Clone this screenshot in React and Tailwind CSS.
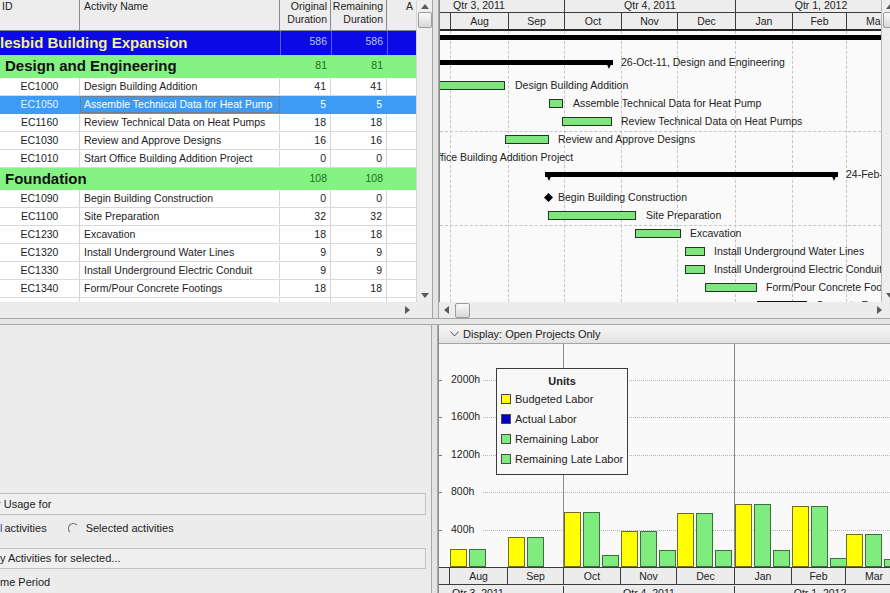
import React from 'react';

const FONT = "font-['Liberation_Sans',Arial,sans-serif]";

// activity table rows; the gantt side reuses the same heights
const ROWS = [
  { kind: 'project', name: 'lesbid Building Expansion', od: 586, rd: 586, hc: 'h-[24px]' },
  { kind: 'wbs', name: 'Design and Engineering', od: 81, rd: 81, hc: 'h-[23px]' },
  { id: 'EC1000', name: 'Design Building Addition', od: 41, rd: 41 },
  { id: 'EC1050', name: 'Assemble Technical Data for Heat Pump', od: 5, rd: 5, selected: true },
  { id: 'EC1160', name: 'Review Technical Data on Heat Pumps', od: 18, rd: 18, rule: true },
  { id: 'EC1030', name: 'Review and Approve Designs', od: 16, rd: 16 },
  { id: 'EC1010', name: 'Start Office Building Addition Project', od: 0, rd: 0 },
  { kind: 'wbs', name: 'Foundation', od: 108, rd: 108, hc: 'h-[22px]' },
  { id: 'EC1090', name: 'Begin Building Construction', od: 0, rd: 0 },
  { id: 'EC1100', name: 'Site Preparation', od: 32, rd: 32, rule: true },
  { id: 'EC1230', name: 'Excavation', od: 18, rd: 18 },
  { id: 'EC1320', name: 'Install Underground Water Lines', od: 9, rd: 9 },
  { id: 'EC1330', name: 'Install Underground Electric Conduit', od: 9, rd: 9 },
  { id: 'EC1340', name: 'Form/Pour Concrete Footings', od: 18, rd: 18 },
  { id: '', name: '', od: '', rd: '' },
];

// bar geometry in px from the left edge of the visible timeline
const GANTT = [
  { type: 'project' },
  { type: 'summary', from: -20, to: 173, top: 5, end: true, label: '26-Oct-11, Design and Engineering', lx: 181 },
  { type: 'bar', from: -10, to: 65, label: 'Design Building Addition', lx: 75 },
  { type: 'bar', from: 109, to: 123, label: 'Assemble Technical Data for Heat Pump', lx: 133 },
  { type: 'bar', from: 122, to: 172, label: 'Review Technical Data on Heat Pumps', lx: 181 },
  { type: 'bar', from: 65, to: 109, label: 'Review and Approve Designs', lx: 118 },
  { type: 'text', label: 'ffice Building Addition Project', lx: -2 },
  { type: 'summary', from: 105, to: 398, top: 4, start: true, end: true, label: '24-Feb-12, Foundation', lx: 406 },
  { type: 'milestone', at: 108, label: 'Begin Building Construction', lx: 118 },
  { type: 'bar', from: 108, to: 196, label: 'Site Preparation', lx: 206 },
  { type: 'bar', from: 195, to: 241, label: 'Excavation', lx: 250 },
  { type: 'bar', from: 245, to: 265, label: 'Install Underground Water Lines', lx: 274 },
  { type: 'bar', from: 245, to: 265, label: 'Install Underground Electric Conduit', lx: 274 },
  { type: 'bar', from: 265, to: 317, label: 'Form/Pour Concrete Footings', lx: 326 },
  { type: 'bar', from: 317, to: 367, dark: true, label: 'Concrete Foundation Walls', lx: 376 },
];

const MONTHS = [
  { label: '', w: 11 },
  { label: 'Aug', w: 58 },
  { label: 'Sep', w: 56 },
  { label: 'Oct', w: 57 },
  { label: 'Nov', w: 56 },
  { label: 'Dec', w: 58 },
  { label: 'Jan', w: 57 },
  { label: 'Feb', w: 54 },
  { label: 'Mar', w: 57 },
];

const QUARTERS = ['Qtr 3, 2011', 'Qtr 4, 2011', 'Qtr 1, 2012'];

const MONTH_LINES = [11, 69, 125, 182, 238, 296, 353, 407];

// budgeted, remaining, remaining late (hours)
const LABOR = [
  [],
  [190, 190],
  [320, 320],
  [590, 590, 130],
  [385, 385, 180],
  [580, 580, 180],
  [675, 675, 180],
  [650, 650, 95],
  [355, 355, 85],
];
const PX_PER_HOUR = 0.0935;
const PLOT_H = 223;

const LEGEND = [
  { label: 'Budgeted Labor', color: 'bg-[#ffff00]' },
  { label: 'Actual Labor', color: 'bg-[#0000c8]' },
  { label: 'Remaining Labor', color: 'bg-[#80ec80]' },
  { label: 'Remaining Late Labor', color: 'bg-[#80ec80]' },
];

function Arrow({ dir }) {
  const pts = {
    up: '0,5 4,0 8,5',
    down: '0,0 8,0 4,5',
    left: '5,0 5,8 0,4',
    right: '0,0 0,8 5,4',
  }[dir];
  const vertical = dir === 'up' || dir === 'down';
  return (
    <svg width={vertical ? 8 : 5} height={vertical ? 5 : 8} className="block">
      <polygon points={pts} fill="#5a5a5a" />
    </svg>
  );
}

function Thumb({ className }) {
  return (
    <div className={`rounded-[2px] border border-[#9c9c9c] bg-linear-to-b from-[#fafafa] to-[#d8d8d8] ${className}`} />
  );
}

function VScroll({ className = '' }) {
  return (
    <div className={`w-[16px] shrink-0 bg-[#eeeeee] border-l border-[#d6d6d6] flex flex-col items-center ${className}`}>
      <div className="h-[12px] flex items-center justify-center"><Arrow dir="up" /></div>
      <Thumb className="w-[14px] h-[16px]" />
      <div className="flex-1" />
      <div className="h-[14px] flex items-center justify-center"><Arrow dir="down" /></div>
    </div>
  );
}

function Num({ children, className = '' }) {
  return <div className={`text-right pr-[4px] ${className}`}>{children}</div>;
}

function TableRow({ r }) {
  if (r.kind === 'project') {
    return (
      <div className={`flex shrink-0 bg-[#0a0ae6] ${r.hc}`}>
        <div className="w-[280px] shrink-0 overflow-hidden whitespace-nowrap text-[15px] font-bold leading-[24px] text-[#f3ef8e]">{r.name}</div>
        <Num className="w-[51px] border-l border-[#5a5aff] text-[#b9c2ff] leading-[20px]">{r.od}</Num>
        <Num className="w-[56px] border-l border-[#5a5aff] text-[#b9c2ff] leading-[20px]">{r.rd}</Num>
        <div className="w-[29px] border-l border-[#5a5aff]" />
      </div>
    );
  }
  if (r.kind === 'wbs') {
    return (
      <div className={`flex shrink-0 bg-[#84f384] ${r.hc}`}>
        <div className="w-[280px] shrink-0 pl-[5px] whitespace-nowrap text-[15px] font-bold leading-[22px] text-[#111]">{r.name}</div>
        <Num className="w-[51px] text-[#1d6e1d] leading-[20px]">{r.od}</Num>
        <Num className="w-[56px] text-[#1d6e1d] leading-[20px]">{r.rd}</Num>
        <div className="w-[29px]" />
      </div>
    );
  }
  const sel = r.selected;
  return (
    <div className={`flex shrink-0 h-[18px] border-b leading-[17px] ${sel ? 'bg-[#3d9bf6] text-white border-[#3d9bf6]' : 'bg-white text-[#222] border-[#dadada]'}`}>
      <div className={`w-[80px] shrink-0 text-center border-r ${sel ? 'border-[#3d9bf6] text-[#e6f0ff]' : 'border-[#d4d4d4]'}`}>{r.id}</div>
      <div className={`w-[200px] shrink-0 pl-[3px] whitespace-nowrap overflow-hidden border leading-[15px] ${sel ? 'border-[#6f7f95]' : 'border-transparent border-r-[#d4d4d4]'}`}>{r.name}</div>
      <Num className={`w-[51px] border-r ${sel ? 'border-[#3d9bf6]' : 'border-[#d4d4d4]'}`}>{r.od}</Num>
      <Num className={`w-[56px] border-r ${sel ? 'border-[#3d9bf6]' : 'border-[#d4d4d4]'}`}>{r.rd}</Num>
      <div className="w-[29px]" />
    </div>
  );
}

function ActivityTable() {
  return (
    <div className="w-[432px] shrink-0 flex flex-col">
      <div className="flex h-[302px]">
        <div className="w-[416px] shrink-0 flex flex-col bg-white overflow-hidden">
          <div className="flex h-[31px] shrink-0 bg-[#ededed] border-b border-[#8a8a8a] text-[#222] leading-[13px]">
            <div className="w-[80px] shrink-0 border-r border-[#8a8a8a] pl-[2px]">ID</div>
            <div className="w-[200px] shrink-0 border-r border-[#8a8a8a] pl-[4px]">Activity Name</div>
            <div className="w-[51px] shrink-0 border-r border-[#8a8a8a] text-right pr-[3px]">Original<br />Duration</div>
            <div className="w-[56px] shrink-0 border-r border-[#8a8a8a] text-right pr-[3px]">Remaining<br />Duration</div>
            <div className="w-[29px] shrink-0 text-right pr-[3px]">A</div>
          </div>
          {ROWS.map((r, i) => <TableRow key={i} r={r} />)}
        </div>
        <VScroll />
      </div>
      <div className="h-[16px] shrink-0 bg-[#ececec] flex items-center justify-end pr-[22px]">
        <Arrow dir="right" />
      </div>
    </div>
  );
}

function SummaryBar({ w, start, end }) {
  return (
    <svg width={w} height={9} className="block">
      <rect x="0" y="0" width={w} height="5" fill="#000" />
      {start && <polygon points="0,0 8,0 4,9" fill="#000" />}
      {end && <polygon points={`${w - 8},0 ${w},0 ${w - 4},9`} fill="#000" />}
    </svg>
  );
}

function GanttRow({ r, g }) {
  const h = r.hc || 'h-[18px]';
  const label = (top) => (
    <div className={`absolute whitespace-nowrap leading-[13px] text-[#222] ${top}`} style={{ left: g.lx }}>{g.label}</div>
  );
  return (
    <div className={`relative shrink-0 ${h} ${r.rule ? 'border-b border-dashed border-[#c6c6c6]' : ''}`}>
      {g.type === 'project' && <div className="absolute left-0 right-0 top-[4px] h-[5px] bg-black" />}
      {g.type === 'summary' && (
        <>
          <div className={`absolute ${g.top === 5 ? 'top-[5px]' : 'top-[4px]'}`} style={{ left: g.from }}>
            <SummaryBar w={g.to - g.from} start={g.start} end={g.end} />
          </div>
          {label(g.top === 5 ? 'top-[1px]' : 'top-0')}
        </>
      )}
      {g.type === 'bar' && (
        <>
          <div
            className={`absolute top-[3px] h-[9px] border ${g.dark ? 'bg-[#2a2a2a] border-[#111]' : 'bg-[#7fe67f] border-[#1d3a1d]'}`}
            style={{ left: g.from, width: g.to - g.from }}
          />
          {label('top-px')}
        </>
      )}
      {g.type === 'milestone' && (
        <>
          <svg width="9" height="9" className="absolute top-[3px]" style={{ left: g.at - 4 }}>
            <polygon points="4.5,0 9,4.5 4.5,9 0,4.5" fill="#000" />
          </svg>
          {label('top-px')}
        </>
      )}
      {g.type === 'text' && label('top-px')}
    </div>
  );
}

function MonthCells({ className = '' }) {
  return (
    <div className={`flex ${className}`}>
      {MONTHS.map((m, i) => (
        <div key={i} className="shrink-0 border-r border-[#3c3c3c] text-center" style={{ width: m.w }}>{m.label}</div>
      ))}
    </div>
  );
}

function QuarterCells({ className = '' }) {
  return (
    <div className={`flex ${className}`}>
      {QUARTERS.map((q, i) => (
        <div key={q} className={`w-[171px] shrink-0 border-r border-[#3c3c3c] text-center ${i === 0 ? '-ml-[46px]' : ''}`}>{q}</div>
      ))}
    </div>
  );
}

function Gantt() {
  return (
    <div className="flex-1 overflow-hidden flex flex-col">
      <div className="flex h-[302px]">
        <div className="w-[442px] shrink-0 flex flex-col overflow-hidden border-l border-[#8c8c8c]">
          <div className="h-[31px] shrink-0 bg-[#ededed] border-b-2 border-[#2a2a2a] text-[#222] overflow-hidden">
            <QuarterCells className="h-[13px] border-b border-[#3c3c3c] leading-[10px]" />
            <MonthCells className="h-[16px] leading-[16px]" />
          </div>
          <div className="relative flex-1 flex flex-col bg-[#fafafa] overflow-hidden">
            {MONTH_LINES.map((x) => (
              <div key={x} className="absolute top-0 bottom-0 border-l border-dashed border-[#c4c4c4]" style={{ left: x - 1 }} />
            ))}
            {ROWS.map((r, i) => <GanttRow key={i} r={r} g={GANTT[i]} />)}
          </div>
        </div>
        <VScroll className="border-l-[#b8b8b8]" />
      </div>
      <div className="h-[16px] shrink-0 bg-[#ececec] flex items-center pl-[5px] pr-[8px]">
        <Arrow dir="left" />
        <Thumb className="ml-[6px] w-[15px] h-[15px]" />
        <div className="flex-1" />
        <Arrow dir="right" />
      </div>
    </div>
  );
}

function UsageOptions() {
  return (
    <div className="w-[432px] shrink-0 bg-[#ececec] pt-[168px] pr-[5px] text-[#222] text-[11px] border-r border-[#a8a8a8]">
      <div className="h-[22px] border border-l-0 border-[#c2c2c2] bg-[#efefef] leading-[20px] whitespace-nowrap">
        <span className="-ml-[3px]">r Usage for</span>
      </div>
      <div className="h-[26px] flex items-center whitespace-nowrap">
        <span className="text-[#3f4f8f]">l</span>
        <span className="ml-[2px]">activities</span>
        <span className="ml-[21px] w-[11px] h-[11px] rounded-full border border-t-[#6e6e6e] border-l-[#6e6e6e] border-r-[#ececec] border-b-[#ececec]" />
        <span className="ml-[7px]">Selected activities</span>
      </div>
      <div className="mt-[7px] h-[21px] border border-l-0 border-[#c2c2c2] bg-[#efefef] leading-[19px] whitespace-nowrap">y Activities for selected...</div>
      <div className="h-[26px] leading-[26px] whitespace-nowrap">me Period</div>
    </div>
  );
}

function LaborChart() {
  const ticks = [2000, 1600, 1200, 800, 400];
  return (
    <div className="flex-1 flex flex-col overflow-hidden border-l border-[#8c8c8c]">
      <div className="h-[19px] shrink-0 bg-linear-to-b from-[#f6f6f6] to-[#e2e2e2] border-b border-[#a4a4a4] flex items-center pl-[11px] text-[11px] text-[#222]">
        <svg width="9" height="6" className="mr-[4px]">
          <polyline points="0.5,0.5 4.5,5 8.5,0.5" fill="none" stroke="#555" strokeWidth="1" />
        </svg>
        Display: Open Projects Only
      </div>

      <div className="relative h-[223px] shrink-0 bg-[#f9f9f9] flex items-end">
        {ticks.map((t) => {
          const y = PLOT_H - t * PX_PER_HOUR;
          return (
            <React.Fragment key={t}>
              <div className="absolute left-0 w-[3px] border-t border-[#777]" style={{ top: y }} />
              <div className="absolute left-[12px] text-[10.5px] leading-[12px] text-[#222]" style={{ top: y - 7 }}>{t}h</div>
              <div className="absolute left-[44px] right-0 border-t border-dotted border-[#b4b4b4]" style={{ top: y }} />
            </React.Fragment>
          );
        })}
        <div className="absolute top-0 bottom-0 left-[124px] border-l border-[#8a8a8a]" />
        <div className="absolute top-0 bottom-0 left-[295px] border-l border-[#8a8a8a]" />

        {MONTHS.map((m, i) => (
          <div key={i} className="relative shrink-0 h-full flex items-end gap-[2px]" style={{ width: m.w }}>
            {LABOR[i].map((v, j) => (
              <div
                key={j}
                className={`w-[17px] shrink-0 border ${j === 0 ? 'bg-[#ffff00] border-[#6e6e1e]' : 'bg-[#7eec7e] border-[#3f6f3f]'}`}
                style={{ height: Math.round(v * PX_PER_HOUR) }}
              />
            ))}
          </div>
        ))}

        <div className="absolute left-[57px] top-[24px] w-[132px] h-[107px] bg-[#f8f8f8] border border-[#3c3c3c] text-[11px] text-[#222]">
          <div className="text-center font-bold leading-[13px] mt-[6px]">Units</div>
          <div className="mt-[1px] flex flex-col">
            {LEGEND.map((l) => (
              <div key={l.label} className="h-[20px] flex items-center pl-[4px]">
                <span className={`w-[10px] h-[10px] border border-[#4a4a4a] ${l.color}`} />
                <span className="ml-[4px] whitespace-nowrap">{l.label}</span>
              </div>
            ))}
          </div>
        </div>
      </div>

      <MonthCells className="h-[18px] shrink-0 bg-[#ececec] border-t border-[#3c3c3c] border-b leading-[17px] text-[10.5px] text-[#222]" />
      <QuarterCells className="flex-1 bg-[#ececec] leading-[14px] text-[10.5px] text-[#222] pt-[1px]" />
    </div>
  );
}

export default function App() {
  return (
    <div className={`${FONT} w-[890px] h-[593px] overflow-hidden bg-[#ececec] flex flex-col text-[10.5px]`}>
      <div className="flex h-[318px] shrink-0">
        <ActivityTable />
        <div className="w-[7px] shrink-0 bg-[#e4e4e4] border-l border-r border-[#a6a6a6]" />
        <Gantt />
      </div>
      <div className="h-[7px] shrink-0 bg-[#e6e6e6] border-t border-b border-[#a6a6a6]" />
      <div className="flex flex-1 min-h-0">
        <UsageOptions />
        <div className="w-[6px] shrink-0 bg-[#e4e4e4] border-r border-[#a6a6a6]" />
        <LaborChart />
      </div>
    </div>
  );
}
